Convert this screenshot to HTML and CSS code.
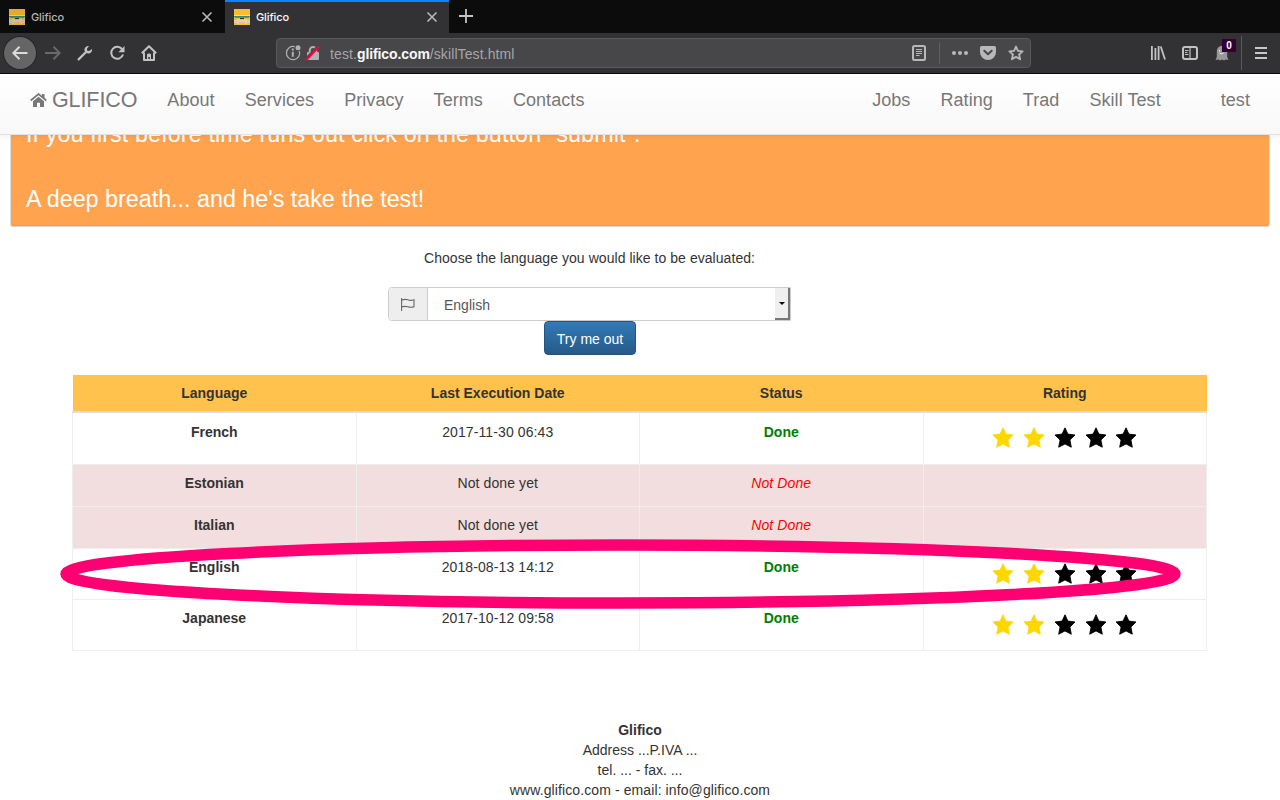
FILE: index.html
```html
<!DOCTYPE html>
<html lang="en">
<head>
<meta charset="utf-8">
<title>Glifico</title>
<link rel="stylesheet" href="styles.css">
</head>
<body>
<svg class="defs" width="0" height="0">
  <defs>
    <symbol id="fav" viewBox="0 0 16 16">
      <rect width="16" height="16" fill="#fbbc34"/>
      <rect y="6" width="16" height="1" fill="#f6dc8c"/>
      <rect y="7" width="16" height="1" fill="#2f8f86"/>
      <rect x="1" y="8" width="14" height="1" fill="#4a9c90"/>
      <rect x="6" y="9" width="4" height="1" fill="#29352d"/>
      <path d="M0 11h3v-1h3v1h4v-1h3v1h3v3h-3v1H3v-1H0z" fill="#e6d0b4"/>
      <path d="M5 13h6v2H5z" fill="#f9b78c"/>
      <path d="M1 12h2v1H1zM13 12h2v1h-2z" fill="#f3c25a"/>
    </symbol>
    <symbol id="close" viewBox="0 0 12 12"><path d="M1.500 1.500l9 9M10.500 1.500l-9 9" stroke="currentColor" stroke-width="1.600" fill="none"/></symbol>
    <symbol id="star" viewBox="0 0 22 21"><path d="M11 .8l2.900 6.300 7.100.9-5.100 5 1.400 7.200L11 16.900l-6.300 3.300L6.100 13 1 8l7.100-.9z" fill="currentColor" stroke="currentColor" stroke-width=".9" stroke-linejoin="round"/></symbol>
  </defs>
</svg>

<div class="tabs">
  <div class="tab tab-idle"><svg class="fav"><use href="#fav"/></svg><span>Glifico</span><svg class="x"><use href="#close"/></svg></div>
  <div class="tab tab-active"><svg class="fav"><use href="#fav"/></svg><span>Glifico</span><svg class="x"><use href="#close"/></svg></div>
  <svg class="plus" viewBox="0 0 14 14"><path d="M7 0v14M0 7h14" stroke="#c4c4c5" stroke-width="1.800"/></svg>
</div>

<div class="toolbar">
  <div class="back"><svg width="16" height="16" viewBox="0 0 16 16"><path d="M15.500 8H1.500M7.500 1.800L1.300 8l6.200 6.200" fill="none" stroke="#dcdcdc" stroke-width="2"/></svg></div>
  <svg class="fwd" width="16" height="16" viewBox="0 0 16 16"><path d="M0 8h14.500M8.500 1.800L14.700 8l-6.200 6.200" fill="none" stroke="#69696b" stroke-width="2"/></svg>
  <svg class="tool" width="16" height="16" viewBox="0 0 16 16"><path d="M1.600 14.400L9 7" stroke="#c2c2c3" stroke-width="2.200" stroke-linecap="round"/><path d="M12 1C8.600.8 6.800 3.600 7.700 6L9.900 8.300C13 9 15.600 6.800 15 3.900L12.200 6 10.200 5.700 9.900 3.700z" fill="#c2c2c3"/></svg>
  <svg class="tool" width="16" height="16" viewBox="0 0 16 16"><path d="M13.300 4.500A6 6 0 1 0 14 9.500" fill="none" stroke="#c2c2c3" stroke-width="2"/><path d="M15.500 1v6.300H9.300z" fill="#c2c2c3"/></svg>
  <svg class="tool" width="16" height="16" viewBox="0 0 16 16"><path d="M.8 8.200L8 1.200l7.200 7M3 7.500V15h10V7.500" fill="none" stroke="#c2c2c3" stroke-width="2" stroke-linejoin="round"/><path d="M6 15v-5.500q0-1 2-1t2 1V15H8.800v-3H7.300v3z" fill="#c2c2c3"/></svg>
  <div class="url">
    <svg width="16" height="16" viewBox="0 0 16 16"><path d="M14.300 6A6.600 6.600 0 1 1 9.700 1.700" fill="none" stroke="#b1b1b3" stroke-width="1.200"/><path d="M6.800 6.700h2v5h-2zM6.800 3.600h2v2h-2z" fill="#b1b1b3"/><circle cx="13" cy="2.700" r="2.500" fill="#b1b1b3"/></svg>
    <svg class="lock" width="16" height="16" viewBox="0 0 16 16"><path d="M4.800 8V5.200a3.200 3.200 0 0 1 6.400 0V8" fill="none" stroke="#b1b1b3" stroke-width="2"/><rect x="2" y="7" width="12" height="8" rx="1" fill="#b1b1b3"/><path d="M0 14.500L13 1" stroke="#474749" stroke-width="2"/><path d="M1.300 15L14 1.500" stroke="#ee0843" stroke-width="2.200"/></svg>
    <span class="addr">test.<b>glifico.com</b>/skillTest.html</span>
    <svg class="reader" width="14" height="16" viewBox="0 0 14 16"><rect x="1" y="1" width="12" height="14" rx="1.500" fill="none" stroke="#b8b8b9" stroke-width="2"/><path d="M4 4.500h6M4 6.500h6M4 8.500h6M4 10.500h3.500" stroke="#b8b8b9"/></svg>
    <i class="sep"></i>
    <svg class="dots" width="16" height="16" viewBox="0 0 16 16"><g fill="#b8b8b9"><circle cx="2" cy="8" r="2"/><circle cx="8" cy="8" r="2"/><circle cx="14" cy="8" r="2"/></g></svg>
    <svg class="pocket" width="16" height="16" viewBox="0 0 16 16"><path d="M1.500 1h13Q16 1 16 2.500V7A8 8 0 0 1 0 7V2.500Q0 1 1.500 1z" fill="#b8b8b9"/><path d="M4.300 5.800L8 9.300l3.700-3.500" fill="none" stroke="#474749" stroke-width="2" stroke-linecap="round" stroke-linejoin="round"/></svg>
    <svg class="bookmark" width="16" height="16" viewBox="0 0 16 16"><path d="M8 1.500l1.900 4.300 4.700.5-3.500 3.200 1 4.800L8 11.900l-4.100 2.400 1-4.800L1.400 6.300l4.700-.5z" fill="none" stroke="#b8b8b9" stroke-width="1.800" stroke-linejoin="round"/></svg>
  </div>
  <div class="right-tools">
    <svg width="16" height="16" viewBox="0 0 16 16"><path d="M1.900 1v14M5.400 3v12M8.600 1v14M10.700 1.500L15 14.500" stroke="#c2c2c3" stroke-width="1.800"/></svg>
    <svg width="16" height="16" viewBox="0 0 16 16"><rect x="1" y="2" width="14" height="12" rx="2" fill="none" stroke="#c2c2c3" stroke-width="2"/><path d="M8 2v12" stroke="#c2c2c3" stroke-width="1.200"/><path d="M3 5.500h3.500M3 7.500h2.500M3 9.500h3.500" stroke="#c2c2c3"/></svg>
    <div class="ghost"><svg width="14" height="16" viewBox="0 0 14 16"><path d="M1.800 12V6a5.200 5.200 0 0 1 10.400 0v6l1.300 3-3-.5-1.500 1-2-1-2 1-1.500-1L.5 15z" fill="#98989a"/><path d="M4.500 5v1.500M7.500 5v1.500M4.500 8q2.500 2 4 0" stroke="#eee" fill="none"/></svg><span class="badge">0</span></div>
    <i class="divider"></i>
    <svg width="12" height="12" viewBox="0 0 12 12"><path d="M0 1h12M0 6h12M0 11h12" stroke="#c8c8c9" stroke-width="1.800"/></svg>
  </div>
</div>

<nav class="navbar">
  <a class="brand"><svg width="17" height="14" viewBox="0 0 17 14"><path d="M.7 7.500L8.500 1l7.800 6.500" fill="none" stroke="#777" stroke-width="1.700"/><path d="M12 1h2.500v5L12 4zM3 8.200l5.500-4.500L14 8.200V14H10V9.800H7V14H3z" fill="#777"/></svg>GLIFICO</a>
  <a>About</a><a>Services</a><a>Privacy</a><a>Terms</a><a>Contacts</a>
  <a class="push">Jobs</a><a>Rating</a><a>Trad</a><a>Skill Test</a><a class="user">test</a>
</nav>

<section class="notice">
  <p class="wide">If you first before time runs out click on the button "submit".</p>
  <p>A deep breath... and he's take the test!</p>
</section>

<div class="chooser">
  <label>Choose the language you would like to be evaluated:</label>
  <div class="select">
    <span class="addon"><svg width="14" height="13" viewBox="0 0 14 13"><path d="M.6 0v13M.6 2.200q3.200-1.500 6.200-.4t6.200 0v7q-3 1-6.200 0t-6.200.2" fill="none" stroke="#666" stroke-width="1.100"/></svg></span>
    <span class="value">English</span>
    <span class="arrow"></span>
  </div>
  <button class="try">Try me out</button>
</div>

<div class="results">
  <table>
    <thead><tr><th>Language</th><th>Last Execution Date</th><th>Status</th><th>Rating</th></tr></thead>
    <tbody>
      <tr class="r-first"><th>French</th><td>2017-11-30 06:43</td><td class="done">Done</td><td><div class="stars"><svg class="on"><use href="#star"/></svg><svg class="on"><use href="#star"/></svg><svg><use href="#star"/></svg><svg><use href="#star"/></svg><svg><use href="#star"/></svg></div></td></tr>
      <tr class="todo"><th>Estonian</th><td>Not done yet</td><td class="notdone">Not Done</td><td></td></tr>
      <tr class="todo"><th>Italian</th><td>Not done yet</td><td class="notdone">Not Done</td><td></td></tr>
      <tr class="r"><th>English</th><td>2018-08-13 14:12</td><td class="done">Done</td><td><div class="stars"><svg class="on"><use href="#star"/></svg><svg class="on"><use href="#star"/></svg><svg><use href="#star"/></svg><svg><use href="#star"/></svg><svg><use href="#star"/></svg></div></td></tr>
      <tr class="r"><th>Japanese</th><td>2017-10-12 09:58</td><td class="done">Done</td><td><div class="stars"><svg class="on"><use href="#star"/></svg><svg class="on"><use href="#star"/></svg><svg><use href="#star"/></svg><svg><use href="#star"/></svg><svg><use href="#star"/></svg></div></td></tr>
    </tbody>
  </table>
  <svg class="ring" width="1124" height="72" viewBox="0 0 1124 72"><ellipse cx="561.500" cy="36" rx="554.500" ry="29" fill="none" stroke="#ff0073" stroke-width="11.500"/></svg>
</div>

<footer>
  <b>Glifico</b>
  <span>Address ...P.IVA ...</span>
  <span>tel. ... - fax. ...</span>
  <span class="contact">www.glifico.com - email: info@glifico.com</span>
</footer>
</body>
</html>
```

FILE: styles.css
```css
* { box-sizing: border-box; }
body {
  margin: 0;
  width: 1280px;
  height: 800px;
  overflow: hidden;
  background: #fff;
  color: #333;
  font: 14px/20px "Liberation Sans", Arial, sans-serif;
}
svg { display: block; flex: none; }
.defs { position: absolute; }

/* Browser chrome */
.tabs { display: flex; height: 33px; background: #0c0c0d; font: 500 11px/33px Inter, sans-serif; }
.tab { display: flex; align-items: center; height: 33px; padding: 1px 12px 0 9px; color: #b5b5b6; }
.tab span { letter-spacing: -.1px; }
.tab-idle { width: 225px; }
.tab-active { width: 224px; background: #323234; color: #f9f9fa; border-top: 2px solid #0a84ff; padding: 0 11px 1px 9px; }
.tab-idle .fav { opacity: .9; }
.fav { width: 16px; height: 16px; margin-right: 6px; }
.x { width: 12px; height: 12px; margin-left: auto; color: #b9b9ba; }
.plus { width: 14px; height: 14px; margin: 9px 0 0 10px; }

.toolbar {
  display: flex;
  align-items: center;
  height: 41px;
  padding: 0 13px 1px 4px;
  background: #323234;
  border-bottom: 1px solid #0c0c0d;
}
.back {
  display: flex; align-items: center; justify-content: center;
  width: 32px; height: 32px; border-radius: 50%;
  background: #656566; box-shadow: 0 0 0 1px #252527;
}
.fwd { margin-left: 9px; }
.tool { margin-left: 16px; }
.url {
  display: flex; align-items: center;
  width: 755px; height: 30px; margin-left: 119px; padding: 0 6px 0 8px;
  background: #474749; border: 1px solid #59595b; border-radius: 4px;
}
.lock { margin-left: 4px; }
.addr { margin-left: 9px; color: #a6a6a8; font: 14px/28px "Liberation Sans", sans-serif; white-space: nowrap; padding-top: 2px; letter-spacing: .1px; }
.addr b { color: #f9f9fa; letter-spacing: -.1px; }
.reader { margin-left: auto; }
.sep { width: 1px; height: 22px; margin: 0 12px 0 13px; background: #606063; }
.pocket, .bookmark { margin-left: 12px; }
.right-tools { display: flex; align-items: center; margin-left: auto; }
.right-tools svg + svg { margin-left: 16px; }
.ghost { position: relative; margin-left: 17px; }
.badge {
  position: absolute; left: 7px; top: -6px; width: 14px; height: 13px;
  background: #330033; color: #fff; font: bold 10px/13px "Liberation Sans", sans-serif; text-align: center;
}
.divider { width: 1px; height: 34px; margin: 0 13px 0 12px; background: #59595b; }

/* Site header */
.navbar {
  position: relative;
  display: flex;
  height: 61px;
  padding: 0 15px;
  background: linear-gradient(#fff, #f8f8f8);
  border-bottom: 1px solid #e2e2e4;
  box-shadow: 0 1px 5px rgba(0, 0, 0, .08);
  color: #777;
  font-size: 18px;
  line-height: 20px;
}
.navbar a { padding: 16px 15px; white-space: nowrap; letter-spacing: .06px; }
.navbar .brand { display: flex; gap: 5px; font-size: 21.500px; letter-spacing: -.1px; }
.brand svg { margin-top: 3px; }
.navbar .push { margin-left: auto; }
.navbar .user { margin-left: 30px; }

.notice {
  display: flex; flex-direction: column; justify-content: flex-end;
  height: 91px; margin: 0 11px; padding: 0 15px 10px; overflow: hidden;
  background: #ffa34f; border-bottom: 1px solid #ffa022;
  border-radius: 0 0 2px 2px;
  box-shadow: 0 1px 1px #d5d5d8, 0 0 0 1px #dedee0;
  color: #fff; font-size: 23.300px; line-height: 32px;
}
.notice p { margin: 0; flex: none; }
.notice .wide { letter-spacing: .12px; }
.notice p + p { margin-top: 33px; }

/* Language picker */
.chooser { display: flex; flex-direction: column; align-items: center; width: 403px; margin: 22px 0 0 388px; }
.chooser label { letter-spacing: .05px; }
.select {
  display: flex; width: 403px; height: 34px; margin-top: 19px;
  border: 1px solid #ccc; border-radius: 4px 0 0 4px; overflow: hidden;
  color: #555; line-height: 34px;
}
.addon { display: flex; align-items: center; justify-content: center; width: 39px; background: #eee; border-right: 1px solid #ccc; }
.value { flex: 1; padding-left: 16px; }
.arrow { display: flex; width: 15px; background: #efefef; border: solid #777; border-width: 0 2px 2px 0; }
.arrow::after { content: ""; margin: 14px 0 0 4px; width: 6px; height: 3px; background: #000; clip-path: polygon(0 0, 100% 0, 50% 100%); }
.try {
  width: 92px; height: 34px; padding: 2px 0 0; margin-left: 1px;
  border: 1px solid #245580; border-radius: 4px;
  background: linear-gradient(#337ab7, #265a88);
  color: #fff; font: 14px/20px "Liberation Sans", sans-serif;
}

/* Results */
.results { position: relative; width: 1135px; margin: 20px 0 0 72px; }
table { width: 1135px; border-collapse: collapse; table-layout: fixed; }
th, td { padding: 9px 8px 0; text-align: center; vertical-align: top; border: 1px solid #eee; }
thead th { background: #ffc34d; border: 0; border-bottom: 2px solid #ddd; padding-top: 8px; }
thead tr { height: 37px; }
td { letter-spacing: .1px; }
.r-first { height: 52px; }
.r { height: 51px; }
.todo { height: 42px; background: #f2dede; }
.todo th, .todo td, .r th, .r td { padding-top: 8px; }
.done { color: #008000; font-weight: bold; letter-spacing: 0; }
.notdone { color: #f00; font-style: italic; }
.stars { display: flex; justify-content: center; gap: 8.800px; margin-top: 5px; color: #000; }
.r .stars { margin-top: 6px; }
.stars svg { width: 22px; height: 21px; }
.stars .on { color: #ffd700; }
.ring { position: absolute; left: -13px; top: 163px; }

footer { display: flex; flex-direction: column; align-items: center; margin-top: 69px; }
.contact { letter-spacing: .1px; }
```
